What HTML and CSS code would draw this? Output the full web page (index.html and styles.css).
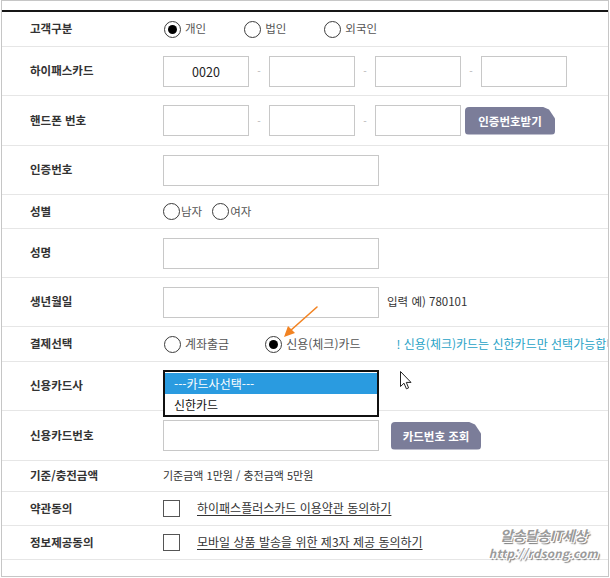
FILE: index.html
```html
<!DOCTYPE html>
<html lang="ko">
<head>
<meta charset="utf-8">
<title>하이패스카드 신청</title>
<link rel="stylesheet" href="styles.css">
</head>
<body>
<div class="frame">
  <div class="form">
    <div class="row h35">
      <div class="label">고객구분</div>
      <div class="field opts">
        <span class="opt"><span class="radio on"></span>개인</span>
        <span class="opt"><span class="radio"></span>법인</span>
        <span class="opt"><span class="radio"></span>외국인</span>
      </div>
    </div>
    <div class="row h49">
      <div class="label">하이패스카드</div>
      <div class="field">
        <input class="box" type="text" value="0020" readonly>
        <span class="dash">-</span>
        <input class="box" type="text" readonly>
        <span class="dash">-</span>
        <input class="box" type="text" readonly>
        <span class="dash">-</span>
        <input class="box" type="text" readonly>
      </div>
    </div>
    <div class="row h50">
      <div class="label">핸드폰 번호</div>
      <div class="field">
        <input class="box" type="text" readonly>
        <span class="dash">-</span>
        <input class="box" type="text" readonly>
        <span class="dash">-</span>
        <input class="box" type="text" readonly>
        <button class="btn btn-near" type="button">인증번호받기</button>
      </div>
    </div>
    <div class="row h49">
      <div class="label">인증번호</div>
      <div class="field"><input class="box wide" type="text" readonly></div>
    </div>
    <div class="row h34">
      <div class="label">성별</div>
      <div class="field opts tight">
        <span class="opt"><span class="radio"></span>남자</span>
        <span class="opt"><span class="radio"></span>여자</span>
      </div>
    </div>
    <div class="row h49">
      <div class="label">성명</div>
      <div class="field"><input class="box wide" type="text" readonly></div>
    </div>
    <div class="row h49">
      <div class="label">생년월일</div>
      <div class="field">
        <input class="box wide" type="text" readonly>
        <span class="hint">입력 예) 780101</span>
      </div>
    </div>
    <div class="row h35">
      <div class="label">결제선택</div>
      <div class="field opts pay">
        <span class="opt"><span class="radio"></span>계좌출금</span>
        <span class="opt"><span class="radio on"></span>신용(체크)카드</span>
        <span class="notice">! 신용(체크)카드는 신한카드만 선택가능합니다</span>
      </div>
    </div>
    <div class="row h49">
      <div class="label">신용카드사</div>
      <div class="field drop">
        <div class="listbox">
          <div class="option selected">---카드사선택---</div>
          <div class="option">신한카드</div>
        </div>
      </div>
    </div>
    <div class="row h50">
      <div class="label">신용카드번호</div>
      <div class="field">
        <input class="box wide" type="text" readonly>
        <button class="btn btn-far" type="button">카드번호 조회</button>
      </div>
    </div>
    <div class="row h31">
      <div class="label">기준/충전금액</div>
      <div class="field text">기준금액 1만원 / 충전금액 5만원</div>
    </div>
    <div class="row h34">
      <div class="label">약관동의</div>
      <div class="field">
        <span class="check"></span>
        <a class="link" href="#">하이패스플러스카드 이용약관 동의하기</a>
      </div>
    </div>
    <div class="row h34">
      <div class="label">정보제공동의</div>
      <div class="field">
        <span class="check"></span>
        <a class="link" href="#">모바일 상품 발송을 위한 제3자 제공 동의하기</a>
      </div>
    </div>
  </div>

  <svg class="arrow" width="44" height="40" viewBox="0 0 44 40" aria-hidden="true">
    <line x1="39" y1="3" x2="12" y2="27" stroke="#f28322" stroke-width="1.6" stroke-linecap="round"/>
    <polygon points="6,33 10,22 17,29" fill="#f28322"/>
  </svg>

  <svg class="cursor" width="12" height="19" viewBox="0 0 12 19" aria-hidden="true">
    <path d="M0.5 0.5 L0.5 15.5 L4 12.2 L6.4 17.8 L8.6 16.9 L6.3 11.4 L11 11.4 Z" fill="#fff" stroke="#222" stroke-width="1" stroke-linejoin="round"/>
  </svg>

  <div class="watermark">
    <div class="wm-title">알송달송IT세상</div>
    <div class="wm-url">http://rdsong.com</div>
  </div>
</div>
</body>
</html>
```

FILE: styles.css
```css
* {
  box-sizing: border-box;
}

body {
  margin: 0;
  background: #fff;
  font-family: "Noto Sans CJK KR", "Noto Sans", sans-serif;
  font-size: 11px;
  line-height: 1.2;
  color: #333;
}

.frame {
  position: relative;
  width: 608px;
  height: 577px;
  margin-left: 1px;
  border: 1px solid #c6c6c6;
  padding-top: 9px;
  overflow: hidden;
}

.form {
  border-top: 2px solid #161616;
}

.row {
  display: flex;
  align-items: center;
  border-bottom: 1px solid #e6e6e6;
}

.h31 { height: 31px; }
.h34 { height: 34px; }
.h35 { height: 35px; }
.h49 { height: 49px; }
.h50 { height: 50px; }

.label {
  flex: none;
  width: 161px;
  padding-left: 28px;
  font-weight: bold;
  font-size: 11.5px;
  color: #333;
}

.field {
  display: flex;
  align-items: center;
  white-space: nowrap;
}

.field.drop {
  align-self: flex-start;
}

.box {
  flex: none;
  width: 86px;
  height: 31px;
  margin: 0;
  padding: 0;
  border: 1px solid #c8c8c8;
  background: #fff;
  font-family: "Noto Sans CJK KR", "Noto Sans", sans-serif;
  font-size: 12.5px;
  color: #222;
  text-align: center;
  outline: none;
}

.box.wide {
  width: 216px;
}

.dash {
  flex: none;
  width: 20px;
  text-align: center;
  color: #b4b4b4;
  font-size: 10px;
}

.btn {
  flex: none;
  width: 90px;
  height: 28px;
  margin: 0;
  padding: 0;
  border: none;
  border-radius: 4px;
  background: #7b7d99;
  color: #fff;
  font-family: "Noto Sans CJK KR", "Noto Sans", sans-serif;
  font-size: 11.5px;
  font-weight: bold;
  clip-path: polygon(0 0, calc(100% - 13px) 0, calc(100% - 6px) 3px, 100% 12px, 100% 100%, 0 100%);
}

.btn-near {
  margin-left: 4px;
}

.btn-far {
  margin-left: 12px;
}

.opts {
  gap: 38px;
}

.opts.tight {
  gap: 10px;
}

.opt {
  display: flex;
  align-items: center;
  gap: 4px;
  color: #555;
  font-size: 11.5px;
}

.opts .opt:first-child {
  margin-left: 1px;
}

.opts.pay {
  gap: 36px;
}

.pay .opt {
  font-size: 12px;
}

.tight .opt {
  gap: 1px;
}

.tight .opt:first-child {
  margin-left: 0;
}

.radio {
  flex: none;
  width: 17px;
  height: 17px;
  border: 1.5px solid #3c3c3c;
  border-radius: 50%;
  display: flex;
  align-items: center;
  justify-content: center;
  background: #fff;
}

.radio.on::after {
  content: "";
  width: 9px;
  height: 9px;
  border-radius: 50%;
  background: #000;
}

.notice {
  color: #27a2c6;
  font-size: 12px;
}

.hint {
  margin-left: 8px;
  font-size: 11.5px;
  color: #333;
}

.text {
  font-size: 11px;
  color: #333;
}

.listbox {
  position: relative;
  z-index: 1;
  width: 216px;
  height: 47px;
  margin-top: 8px;
  border: 2px solid #111;
  background: #fff;
  padding-top: 1px;
}

.option {
  height: 21px;
  padding-left: 9px;
  font-size: 12px;
  line-height: 21px;
  color: #111;
}

.option.selected {
  background: #2a9be0;
  color: #fff;
}

.check {
  flex: none;
  width: 17px;
  height: 17px;
  border: 1.5px solid #555;
  background: #fff;
  margin-right: 17px;
}

.link {
  color: #333;
  font-size: 12px;
  text-decoration: underline;
  text-underline-offset: 2px;
}

.arrow {
  position: absolute;
  left: 276px;
  top: 303px;
}

.cursor {
  position: absolute;
  left: 398px;
  top: 370px;
}

.watermark {
  position: absolute;
  right: 10px;
  bottom: 15px;
  text-align: center;
  color: #9a9a9a;
  font-weight: bold;
  font-style: italic;
  text-shadow: 1px 1px 0 #fff, -1px -1px 0 #fff, 1px -1px 0 #fff, -1px 1px 0 #fff, 2px 2px 1px #777;
}

.wm-title {
  font-size: 14px;
  letter-spacing: -0.5px;
}

.wm-url {
  margin-top: 3px;
  font-size: 11.5px;
  letter-spacing: 0.3px;
}
```
